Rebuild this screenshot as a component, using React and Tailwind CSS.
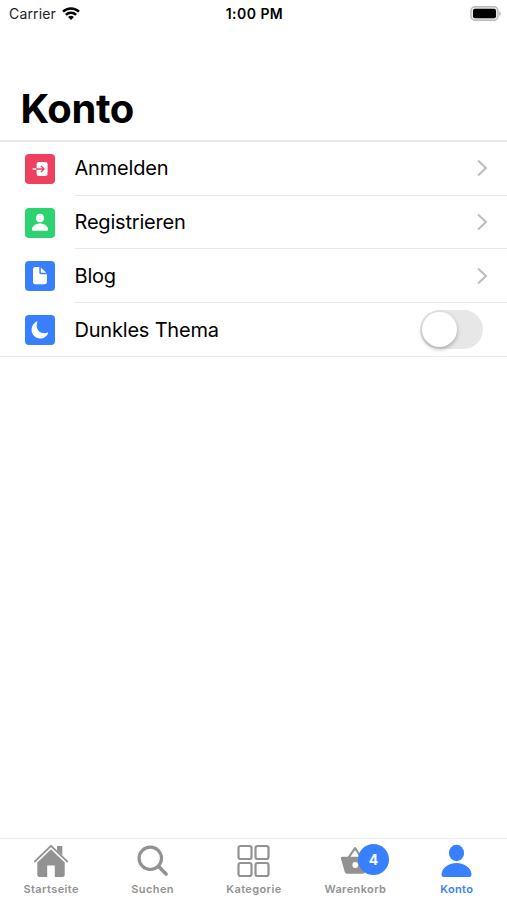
import { useState } from 'react';

const rows = [
  { title: 'Anmelden', icon: LoginIcon, color: 'bg-[#ee4060]' },
  { title: 'Registrieren', icon: PersonIcon, color: 'bg-[#2dd36f]' },
  { title: 'Blog', icon: DocumentIcon, color: 'bg-[#3880ff]' },
];

const tabs = [
  { title: 'Startseite', icon: HomeIcon },
  { title: 'Suchen', icon: SearchIcon },
  { title: 'Kategorie', icon: GridIcon },
  { title: 'Warenkorb', icon: BasketIcon, badge: 4 },
  { title: 'Konto', icon: UserIcon },
];

function LoginIcon() {
  return (
    <svg className="size-[30px]" viewBox="0 0 30 30" fill="none">
      <rect x="11.6" y="8" width="11" height="14" rx="2.2" fill="#fff" />
      <path d="M8.2 15h3.4" stroke="#fff" strokeWidth="1.3" strokeLinecap="round" />
      <path d="M11.6 15h7.2M16.2 12.1l2.9 2.9-2.9 2.9" stroke="#ee4060" strokeWidth="1.3" strokeLinecap="round" strokeLinejoin="round" />
    </svg>
  );
}

function PersonIcon() {
  return (
    <svg className="size-[30px]" viewBox="0 0 30 30" fill="#fff">
      <ellipse cx="15" cy="10" rx="3.9" ry="4.3" />
      <path d="M15 15.6c-3.8 0-7.6 2.1-8 5.6-.1.9.3 1.5 1.2 1.5h13.6c.9 0 1.3-.6 1.2-1.5-.4-3.5-4.2-5.6-8-5.6z" />
    </svg>
  );
}

function DocumentIcon() {
  return (
    <svg className="size-[30px]" viewBox="0 0 30 30" fill="#fff">
      <path d="M14.3 6.1H10.2a2.2 2.2 0 0 0-2.2 2.2v12.7a2.2 2.2 0 0 0 2.2 2.2h9.5a2.2 2.2 0 0 0 2.2-2.2v-7.7h-5.7a1.9 1.9 0 0 1-1.9-1.9z" />
      <path d="M15.8 6.5v4.6c0 .4.3.7.7.7h4.9z" />
    </svg>
  );
}

function MoonIcon() {
  return (
    <svg className="size-[30px]" viewBox="0.5 0 30 30" fill="#fff">
      <path d="M12.3 6.4c.4-.2.8.1.6.6-.5 1.3-.7 2.5-.7 3.7 0 4.4 3.3 7.5 7.7 7.5 1.1 0 2.2-.2 3.1-.6.5-.2.8.2.6.6-1.3 3.1-4.2 5.3-7.8 5.3-4.9 0-8.7-3.7-8.7-8.5 0-3.8 2.1-7.2 5.2-8.6z" />
    </svg>
  );
}

function WifiIcon() {
  return (
    <svg className="ml-[6px] h-[14px] w-[18px]" viewBox="0 0 18 14" fill="none" stroke="#000" strokeWidth="2.5">
      <path d="M1 4.7a11.3 11.3 0 0 1 16 0" />
      <path d="M3.9 7.9a7.2 7.2 0 0 1 10.2 0" />
      <path d="M9 13l-2.9-2.9a4.1 4.1 0 0 1 5.8 0z" fill="#000" stroke="none" />
    </svg>
  );
}

function BatteryIcon() {
  return (
    <svg className="-mt-[2px] h-[15px] w-[32px]" viewBox="0 0 32 15">
      <rect x="1" y=".7" width="27" height="13.6" rx="4" fill="#e9e9e9" stroke="#b9b9b9" strokeWidth="1.4" />
      <rect x="3" y="2.8" width="23" height="9.4" rx="2" />
      <path d="M29.2 5.2c2 .7 2 3.9 0 4.6z" fill="#b4b4b4" />
    </svg>
  );
}

function HomeIcon() {
  return (
    <svg className="size-[34px]" viewBox="0 0 34 34" fill="#929292">
      <path d="M.9 17.4L17 1.9l16.1 15.5" fill="none" stroke="#929292" strokeWidth="2" strokeLinecap="round" strokeLinejoin="round" />
      <path d="M23 2h5.3v9.6L23 6.5z" />
      <path d="M17 5.3L3.3 18.5V30.7c0 1.3.9 2.2 2.2 2.2h7.7V21.5h7.6v11.4h7.7c1.3 0 2.2-.9 2.2-2.2V18.5z" />
    </svg>
  );
}

function SearchIcon() {
  return (
    <svg className="size-[34px]" viewBox="0 0 34 34" fill="none" stroke="#929292">
      <circle cx="15.3" cy="14.3" r="11.2" strokeWidth="3.2" />
      <path d="M23.6 22.6l7.5 7.5" strokeWidth="3.6" strokeLinecap="round" />
    </svg>
  );
}

function GridIcon() {
  return (
    <svg className="size-[34px]" viewBox="-0.5 0 34 34" fill="none" stroke="#929292" strokeWidth="2.2">
      <rect x="2" y="2" width="13" height="13" rx="2" />
      <rect x="19" y="2" width="13" height="13" rx="2" />
      <rect x="2" y="19" width="13" height="13" rx="2" />
      <rect x="19" y="19" width="13" height="13" rx="2" />
    </svg>
  );
}

function BasketIcon() {
  return (
    <svg className="size-[34px]" viewBox="0 0 34 34">
      <path d="M10.3 14L17 4.2 23.7 14" fill="none" stroke="#929292" strokeWidth="2.2" strokeLinejoin="round" />
      <path d="M4.2 12.8h25.6c1 0 1.6.8 1.3 1.7l-3.8 13.2c-.4 1.3-1.2 2-2.5 2H9.2c-1.3 0-2.2-.7-2.5-2L2.9 14.5c-.3-.9.3-1.7 1.3-1.7z" fill="#929292" />
      <circle cx="17.3" cy="21" r="2.9" fill="#fff" />
    </svg>
  );
}

function UserIcon() {
  return (
    <svg className="size-[34px]" viewBox="-0.5 0 34 34" fill="#3880ff">
      <ellipse cx="17" cy="9" rx="7.6" ry="8.2" />
      <path d="M17 19c-7.2 0-14.1 4-15 11-.1 1.6.5 2.9 2.2 2.9h25.6c1.7 0 2.3-1.3 2.2-2.9C31.1 23 24.2 19 17 19z" />
    </svg>
  );
}

function IconTile({ icon: Icon, color }) {
  return (
    <div className={`ml-[25px] size-[30px] shrink-0 overflow-hidden rounded-[4px] ${color}`}>
      <Icon />
    </div>
  );
}

function StatusBar() {
  return (
    <header className="grid h-[28px] shrink-0 grid-cols-3 items-center pl-[9px] pr-[5px] text-[14px] leading-none">
      <div className="flex items-center text-[#222]">
        <span className="tracking-[0.15px]">Carrier</span>
        <WifiIcon />
      </div>
      <span className="-ml-[2px] text-center font-semibold tracking-[0.45px]">1:00 PM</span>
      <div className="flex justify-end">
        <BatteryIcon />
      </div>
    </header>
  );
}

export default function App() {
  const [dark, setDark] = useState(false);

  return (
    <div className="flex h-[900px] w-[507px] flex-col overflow-hidden bg-white font-['Inter',sans-serif] text-black">
      <StatusBar />
      <div className="h-[114px] shrink-0 border-b-2 border-[#e9e9e9] pl-[20.5px] pt-[56px]">
        <h1 className="text-[40px] font-bold leading-[50px] tracking-[-0.4px]">Konto</h1>
      </div>

      <ul className="border-b border-[#e9e9e9]">
        {rows.map((row) => (
          <li key={row.title} className="flex h-[53.7px] items-center">
            <IconTile icon={row.icon} color={row.color} />
            <button type="button" className="ml-[19.5px] flex h-full flex-1 items-center justify-between border-b border-[#e9e9e9] pr-[19px] text-left">
              <span className="text-[20px] tracking-[-0.2px]">{row.title}</span>
              <svg className="h-[18px] w-[12px]" viewBox="0 0 12 18" fill="none" stroke="#bdbdbd" strokeWidth="2">
                <path d="M2 1.5L10 9l-8 7.5" />
              </svg>
            </button>
          </li>
        ))}
        <li className="flex h-[53.4px] items-center">
          <IconTile icon={MoonIcon} color="bg-[#3880ff]" />
          <div className="ml-[19.5px] flex flex-1 items-center justify-between pr-[24px]">
            <span className="text-[20px] tracking-[-0.2px]">Dunkles Thema</span>
            <button
              type="button"
              role="switch"
              aria-checked={dark}
              aria-label="Dunkles Thema"
              onClick={() => setDark(!dark)}
              className={`flex h-[39px] w-[63px] items-center rounded-full px-[2px] ${dark ? 'justify-end bg-[#3880ff]' : 'bg-[#e7e7e7]'}`}
            >
              <span className="size-[35px] rounded-full bg-white shadow-[0_2px_4px_rgba(0,0,0,0.28)]" />
            </button>
          </div>
        </li>
      </ul>

      <nav className="mt-auto grid h-[62px] shrink-0 grid-cols-5 border-t border-[#ececec]">
        {tabs.map((tab) => (
          <button
            key={tab.title}
            type="button"
            className={`flex flex-col items-center pt-[5px] ${tab.title === 'Konto' ? 'text-[#3880ff]' : 'text-[#929292]'}`}
          >
            <span className="relative">
              <tab.icon />
              {tab.badge && (
                <span className="absolute left-[20px] top-[-0.5px] flex size-[31px] items-center justify-center rounded-full bg-[#3880ff] text-[14px] font-bold text-white">
                  {tab.badge}
                </span>
              )}
            </span>
            <span className="mt-[4px] pl-px text-[11px] font-semibold leading-[14px] tracking-[0.4px]">{tab.title}</span>
          </button>
        ))}
      </nav>
    </div>
  );
}
